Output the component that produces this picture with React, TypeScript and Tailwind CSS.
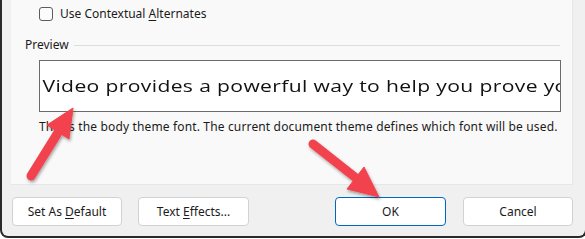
import React from "react";

const ui = { fontFamily: '"Noto Sans", "Open Sans", sans-serif' };

function Btn({ children, primary, w }: { children: React.ReactNode; primary?: boolean; w: string }) {
  return (
    <div
      className={`${w} h-[29px] flex items-center justify-center rounded-[4px] bg-white text-[12px] text-[#1b1b1b] border ${
        primary ? "border-[#0067c0]" : "border-[#d2d2d2]"
      }`}
      style={ui}
    >
      <span className="whitespace-pre">{children}</span>
    </div>
  );
}

export default function App() {
  return (
    <div className="relative w-[585px] h-[239px] bg-white overflow-hidden">
      <div className="w-[587px] h-[238px] bg-[#f0f0f0] border-l-2 border-b-2 border-r-2 border-[#2a2a2a] rounded-b-[8px] flex flex-col">
        <div className="ml-[9px] w-[562px] h-[185px] bg-[#f9f9f9] border-r border-b border-[#e6e6e6] flex flex-col">
          <div className="flex items-center pl-[28px] pt-[7px] gap-[7px]">
            <div className="w-[14px] h-[14px] rounded-[3px] border border-[#5c5c5c] bg-[#fbfbfb]" />
            <span className="text-[12px] leading-[14px] text-[#1b1b1b]" style={ui}>
              Use Contextual <u className="underline-offset-2">A</u>lternates
            </span>
          </div>
          <div className="flex items-center pl-[14px] pr-[12px] mt-[17px]">
            <span className="text-[12px] leading-[14px] text-[#1b1b1b]" style={ui}>
              Preview
            </span>
            <div className="flex-1 h-px bg-[#dddddd] ml-[5px]" />
          </div>
          <div className="ml-[28px] mt-[8px] w-[522px] h-[52px] border border-[#6b6b6b] bg-white flex items-center overflow-hidden">
            <span
              className="block whitespace-nowrap pl-[2px] pb-[1px] text-[17px] text-[#111] tracking-[0.3px] origin-left scale-x-[1.24]"
              style={{ fontFamily: '"Open Sans", sans-serif' }}
            >
              Video provides a powerful way to help you prove your point.
            </span>
          </div>
          <div className="pl-[28px] mt-[7px] text-[12px] leading-[16px] text-[#1b1b1b] tracking-[0.15px]" style={ui}>
            This is the body theme font. The current document theme defines which font will be used.
          </div>
        </div>
        <div className="flex items-start mt-[12px] pl-[10px]">
          <Btn w="w-[110px]">
            Set As <u className="underline-offset-2">D</u>efault
          </Btn>
          <div className="ml-[16px]">
            <Btn w="w-[111px]">
              Text <u className="underline-offset-2">E</u>ffects...
            </Btn>
          </div>
          <div className="ml-[86px]">
            <Btn w="w-[111px]" primary>
              OK
            </Btn>
          </div>
          <div className="ml-[17px]">
            <Btn w="w-[110px]">Cancel</Btn>
          </div>
        </div>
      </div>
      <svg className="absolute inset-0 pointer-events-none" width="585" height="239" viewBox="0 0 585 239">
        <defs>
          <filter id="sh" x="-20%" y="-20%" width="140%" height="140%">
            <feDropShadow dx="1" dy="2" stdDeviation="1.5" floodColor="#000" floodOpacity="0.35" />
          </filter>
        </defs>
        <g filter="url(#sh)" fill="#f1434d" stroke="#f1434d">
          <line x1="31" y1="176" x2="59" y2="131" strokeWidth="9" strokeLinecap="round" />
          <polygon points="73,108 69,139 47,125" strokeWidth="1" strokeLinejoin="round" />
          <line x1="313" y1="144" x2="356" y2="178" strokeWidth="9" strokeLinecap="round" />
          <polygon points="379,197 347,189 364,167" strokeWidth="1" strokeLinejoin="round" />
        </g>
      </svg>
    </div>
  );
}
